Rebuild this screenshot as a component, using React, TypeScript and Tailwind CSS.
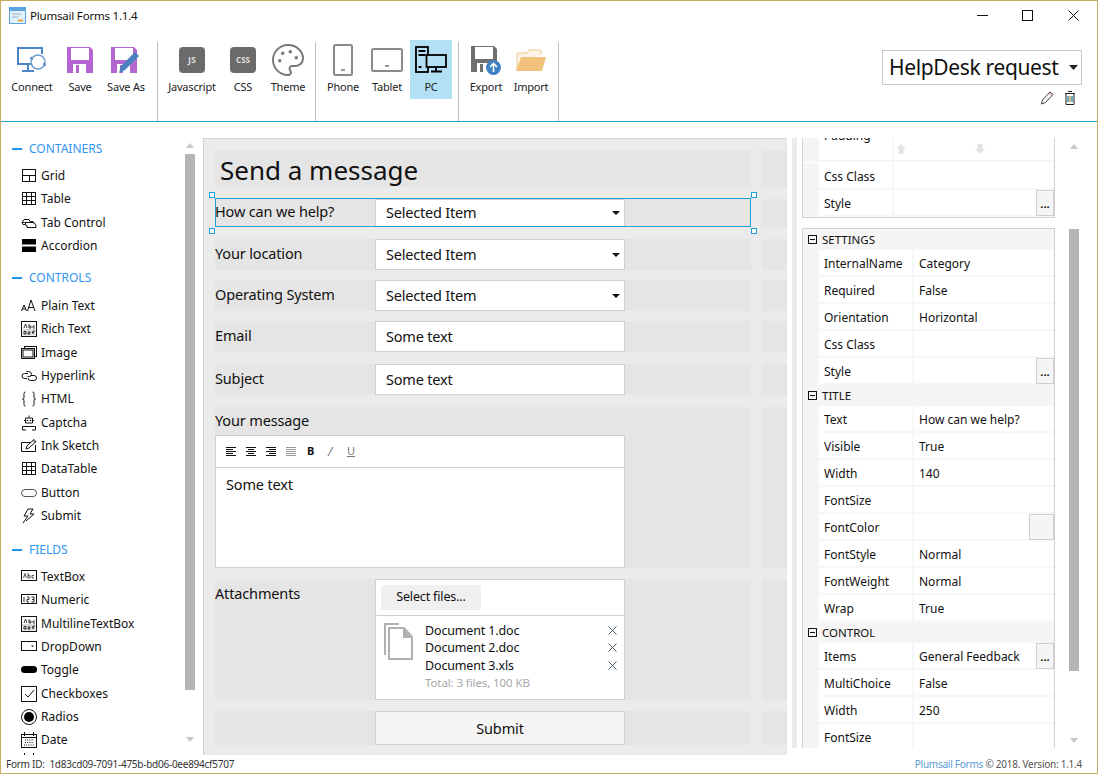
import { Palette } from 'lucide-react'
import type { ReactNode } from 'react'

const ink = { fill: 'none', stroke: '#111', strokeWidth: 1 }

function Ico({ children }: { children: ReactNode }) {
  return (
    <svg width="16" height="16" viewBox="0 0 16 16" className="shrink-0" {...ink}>
      {children}
    </svg>
  )
}

const sideIcons: Record<string, ReactNode> = {
  Grid: <><rect x="1.5" y="1.5" width="13" height="12" /><path d="M1.5 7.5h13M8.5 7.5v6" /></>,
  Table: <><rect x="1.5" y="1.5" width="13" height="12" /><path d="M1.5 5.5h13M1.5 9.5h13M5.5 1.5v12M10.5 1.5v12" /></>,
  'Tab Control': <path d="M1 7.5l2-3h5l1 2h3l1 2M3.5 7.5h-2.5M5 10.5l-1-3h9l2 3v2H6v-2zM1 7.5l1 2h2" />,
  Accordion: <><rect x="1" y="1" width="14" height="5.5" fill="#000" stroke="none" /><rect x="1" y="8.5" width="14" height="5.5" fill="#000" stroke="none" /></>,
  'Plain Text': <path d="M.5 13l2.5-6 2.5 6M1.5 11h3M6.5 13l3.500-11 4 11M8 9.500h5" />,
  'Rich Text': <><rect x=".5" y=".5" width="15" height="15" /><rect x="1.500" y="8" width="13" height="6.500" fill="#d8d8d8" stroke="none" /><path d="M3 7l1.500-4L6 7M8 3v4h2V5H8M14 5h-2v2h2M3 13h2v-2.500H3zM7 11h2v1H7v1h2M12 13v-3h2M11 11.500h2" strokeWidth=".8" /></>,
  Image: <><rect x="3.500" y="1.500" width="12" height="10" /><rect x=".5" y="3.500" width="13" height="10" fill="#fff" /><rect x="2" y="5" width="10" height="7" fill="#fff" /></>,
  Hyperlink: <path d="M7 5.500H3.500a2.500 2.500 0 0 0 0 5H6M5.500 3.500h2a3 3 0 0 1 3 3v0a2 2 0 0 1-2 2H6.500M9 7.500H13a2.500 2.500 0 0 1 0 5H9.500A2.500 2.500 0 0 1 7 10" />,
  HTML: <path d="M4.500 1C2.500 1 3 3 3 5S3 8 1.500 8C3 8 3 9 3 11s-.5 4 1.500 4M11.500 1c2 0 1.500 2 1.500 4s0 3 1.500 3c-1.500 0-1.500 1-1.500 3s.5 4-1.500 4" />,
  Captcha: <><path d="M8 .5v2M4.500 3h7v5h-7zM1.500 15v-3.500h13V15M1.500 15H5M11 15h3.500M3 5.500h1.500M11.500 5.500H13" /><circle cx="6.500" cy="5.500" r=".8" fill="#000" stroke="none" /><circle cx="9.500" cy="5.500" r=".8" fill="#000" stroke="none" /></>,
  'Ink Sketch': <path d="M10 4.500H.5v9h14V7M5 11l1-3 7-6.500 2 2-7 6.500-3 1zM12 2.500l2 2" />,
  DataTable: <><rect x="1.500" y="1.500" width="13" height="12" /><path d="M1.500 5.500h13M1.500 9.500h13M5.500 1.500v12M10.500 1.500v12" /></>,
  Button: <rect x=".5" y="4.500" width="15" height="7" rx="3.500" stroke="#555" />,
  Submit: <path d="M7 1l-4 7h4l-5 7M7 1h5L9 6h4L5 13" />,
  TextBox: <><rect x=".5" y="1.500" width="15" height="10" /><path d="M2.500 9l1.500-4.500L5.500 9M7 4v5h2V6.500H7M13 6.500h-2V9h2" strokeWidth=".9" stroke="#444" /></>,
  Numeric: <><rect x=".5" y="2.500" width="15" height="9" /><path d="M3 5v5M6 5h2v2.500H6V10h2M10.500 5H13v2.500h-2M13 7.500V10h-2.500" strokeWidth=".9" /></>,
  MultilineTextBox: <><rect x=".5" y=".5" width="15" height="15" /><rect x="1.500" y="8" width="13" height="6.500" fill="#d8d8d8" stroke="none" /><path d="M3 7l1.500-4L6 7M8 3v4h2V5H8M14 5h-2v2h2M3 13h2v-2.500H3zM7 11h2v1H7v1h2M12 13v-3h2M11 11.500h2" strokeWidth=".8" /></>,
  DropDown: <><rect x=".5" y="2.500" width="15" height="9" /><path d="M10 6.500h3l-1.500 1.500z" fill="#000" stroke="none" /></>,
  Toggle: <rect x="0" y="4" width="16" height="7" rx="3.500" fill="#000" stroke="none" />,
  Checkboxes: <><rect x=".5" y=".5" width="15" height="15" /><path d="M4 8l3 3 6-7" /></>,
  Radios: <><circle cx="8" cy="8" r="7.500" /><circle cx="8" cy="8" r="5" fill="#000" stroke="none" /></>,
  Date: <><rect x=".5" y="2.500" width="15" height="13" /><path d="M3.500 0v4M12.500 0v4M.5 5.500h15" /><path d="M4 8h9M4 10.500h9M3 13h10" strokeDasharray="1 1.200" /></>,
}

function SideItem({ name }: { name: string }) {
  return (
    <div className="flex h-[23.33px] items-center gap-[4px] pl-[20px] text-[12px] text-[#111]">
      <Ico>{sideIcons[name]}</Ico>
      <span>{name}</span>
    </div>
  )
}

function SideHeader({ title, className }: { title: string; className: string }) {
  return (
    <div className={`flex h-[20px] items-center gap-[7px] pl-[11px] text-[12px] text-[#2f96f3] ${className}`}>
      <div className="h-[2px] w-[10px] bg-[#1e96f0]" />
      <span>{title}</span>
    </div>
  )
}

function Scrollbar({ pad, thumb, end }: { pad: string; thumb: string; end: string }) {
  return (
    <div className={`flex w-[10px] flex-col items-center ${pad}`}>
      <svg width="8" height="5" viewBox="0 0 8 5" className="shrink-0"><path d="M4 0l4 5H0z" fill="#c8c8c8" /></svg>
      <div className={`w-[10px] shrink-0 bg-[#b5b5b5] ${thumb}`} />
      <svg width="8" height="5" viewBox="0 0 8 5" className={`shrink-0 ${end}`}><path d="M4 5l4-5H0z" fill="#c8c8c8" /></svg>
    </div>
  )
}

function ToolButton({ label, icon, width, active }: { label: string; icon: ReactNode; width: string; active?: boolean }) {
  return (
    <div className={`flex h-[59px] flex-col items-center ${width} ${active ? 'bg-[#b3e0f5]' : ''}`}>
      <div className="flex h-[40px] items-center justify-center">{icon}</div>
      <div className="text-[11px] leading-[14px] tracking-[-0.2px] text-[#222]">{label}</div>
    </div>
  )
}

function Floppy({ color }: { color: string }) {
  return (
    <svg width="26" height="26" viewBox="0 0 26 26">
      <path d="M0 0h23l3 3v23H0z" fill={color} />
      <rect x="4" y="1" width="18" height="12" fill="#fff" />
      <rect x="6" y="17" width="13" height="9" fill="#fff" />
      <rect x="9" y="18" width="3" height="8" fill={color} />
    </svg>
  )
}

function ConnectIcon() {
  return (
    <svg width="32" height="28" viewBox="0 0 32 28" fill="none" stroke="#4a86c5" strokeWidth="2">
      <path d="M16 18H2V2h24v6" />
      <path d="M12 19v5M6 25h12" />
      <circle cx="22" cy="16" r="7" stroke="#6f9fcf" strokeWidth="1.500" />
      <path d="M15 11l1 3M29 20l-1-3" />
    </svg>
  )
}

function SaveAsIcon() {
  return (
    <div className="relative h-[26px] w-[30px]">
      <Floppy color="#b565cf" />
      <svg width="24" height="26" viewBox="0 0 24 26" className="absolute left-[6px] top-[3px]">
        <path d="M18 2l4 4-14 14-6 3 2-7z" fill="#4a7fc0" />
      </svg>
    </div>
  )
}

function BadgeIcon({ text, size }: { text: string; size: string }) {
  return (
    <div className={`flex h-[26px] w-[26px] items-center justify-center rounded-[4px] bg-[#6b6b6b] font-bold text-[#ddd] ${size}`}>
      {text}
    </div>
  )
}

function PhoneIcon() {
  return (
    <svg width="20" height="32" viewBox="0 0 20 32" fill="none">
      <rect x="1" y="1" width="18" height="30" rx="1.500" stroke="#8a8a8a" strokeWidth="2" />
      <path d="M8 26h4" stroke="#777" strokeWidth="1.500" />
    </svg>
  )
}

function TabletIcon() {
  return (
    <svg width="32" height="24" viewBox="0 0 32 24" fill="none">
      <rect x="1" y="1" width="30" height="22" rx="1.500" stroke="#8a8a8a" strokeWidth="2" />
      <path d="M14 18h4" stroke="#777" strokeWidth="1.500" />
    </svg>
  )
}

function PcIcon() {
  return (
    <svg width="32" height="28" viewBox="0 0 32 28" fill="none" stroke="#000" strokeWidth="1.800">
      <rect x="1" y="1" width="12" height="25" />
      <path d="M3.500 5h7M3.500 9h7M3.500 21h3" />
      <rect x="11.500" y="9" width="19.500" height="12" fill="#b3e0f5" />
      <path d="M21 21v4M16 25.500h11" />
    </svg>
  )
}

function ExportIcon() {
  return (
    <div className="relative h-[28px] w-[30px]">
      <Floppy color="#6f6f6f" />
      <svg width="15" height="15" viewBox="0 0 15 15" className="absolute left-[15px] top-[14px]">
        <circle cx="7.500" cy="7.500" r="7.500" fill="#3f81c4" />
        <path d="M7.500 12V4M4 7l3.500-3.500L11 7" fill="none" stroke="#fff" strokeWidth="1.600" />
      </svg>
    </div>
  )
}

function ImportIcon() {
  return (
    <svg width="30" height="23" viewBox="0 0 30 23">
      <path d="M1 21V4h10l2-3h12v5" fill="#fbf3e5" stroke="#efc98c" />
      <path d="M0 22L5 8h25l-4 14z" fill="#f0c27b" />
    </svg>
  )
}

function Toolbar() {
  return (
    <div className="flex h-[82px] shrink-0 border-b border-[#1f9fcd] pt-[2px]">
      <div className="flex h-[79px] w-[157px] items-start border-r border-[#bdbdbd] pl-[7px]">
        <div className="-mt-[2px] flex">
          <ToolButton label="Connect" width="w-[48px]" icon={<ConnectIcon />} />
          <ToolButton label="Save" width="w-[48px]" icon={<Floppy color="#b565cf" />} />
          <ToolButton label="Save As" width="w-[44px]" icon={<SaveAsIcon />} />
        </div>
      </div>
      <div className="flex h-[79px] w-[158px] items-start border-r border-[#bdbdbd] pl-[4px]">
        <div className="-mt-[2px] flex">
          <ToolButton label="Javascript" width="w-[60px]" icon={<BadgeIcon text="JS" size="text-[9px]" />} />
          <ToolButton label="CSS" width="w-[42px]" icon={<BadgeIcon text="CSS" size="text-[8px]" />} />
          <ToolButton label="Theme" width="w-[48px]" icon={<Palette size={36} strokeWidth={1.300} color="#777" />} />
        </div>
      </div>
      <div className="flex h-[79px] w-[143px] items-start border-r border-[#bdbdbd] pl-[6px]">
        <div className="-mt-[2px] flex gap-[2px]">
          <ToolButton label="Phone" width="w-[42px]" icon={<PhoneIcon />} />
          <ToolButton label="Tablet" width="w-[42px]" icon={<TabletIcon />} />
          <ToolButton label="PC" width="w-[42px]" active icon={<PcIcon />} />
        </div>
      </div>
      <div className="flex h-[79px] w-[100px] items-start border-r border-[#bdbdbd] pl-[5px]">
        <div className="-mt-[2px] flex">
          <ToolButton label="Export" width="w-[44px]" icon={<ExportIcon />} />
          <ToolButton label="Import" width="w-[46px]" icon={<ImportIcon />} />
        </div>
      </div>
      <div className="flex flex-1 flex-col items-end pr-[15px] pt-[8px]">
        <div className="flex h-[35px] w-[200px] items-center justify-between border border-[#c8c8c8] pl-[6px] pr-[3px] text-[21px] leading-none tracking-[-0.35px] text-[#111]">
          <span>HelpDesk request</span>
          <svg width="9" height="5" viewBox="0 0 9 5"><path d="M0 0h9L4.500 5z" fill="#222" /></svg>
        </div>
        <div className="mr-[5px] mt-[5px] flex gap-[9px]">
          <svg width="14" height="16" viewBox="0 0 14 16" fill="none" stroke="#444" strokeWidth="1">
            <path d="M1.500 14l1-4 7.500-8 3 2.500-7.500 8z" />
            <path d="M9 3l3 2.500" stroke="#c77" />
          </svg>
          <svg width="14" height="16" viewBox="0 0 14 16" fill="none" stroke="#222" strokeWidth="1">
            <path d="M5 1.500h4M2 3.500h10M3 3.500v11h8v-11" />
            <path d="M5 6v6" stroke="#3a8fc0" strokeWidth="1.500" />
            <path d="M7 6v6" stroke="#c9a13f" strokeWidth="1.500" />
            <path d="M9 6v6" stroke="#3a8fc0" strokeWidth="1.500" />
          </svg>
        </div>
      </div>
    </div>
  )
}

function Sidebar() {
  const containers = ['Grid', 'Table', 'Tab Control', 'Accordion']
  const controls = ['Plain Text', 'Rich Text', 'Image', 'Hyperlink', 'HTML', 'Captcha', 'Ink Sketch', 'DataTable', 'Button', 'Submit']
  const fields = ['TextBox', 'Numeric', 'MultilineTextBox', 'DropDown', 'Toggle', 'Checkboxes', 'Radios', 'Date']
  return (
    <div className="flex w-[202px] shrink-0 overflow-hidden bg-white">
      <div className="w-[184px] shrink-0 pt-[17px]">
        <SideHeader title="CONTAINERS" className="" />
        <div className="pt-[5.33px]">{containers.map((n) => <SideItem key={n} name={n} />)}</div>
        <SideHeader title="CONTROLS" className="mt-[10.33px]" />
        <div className="pt-[6.33px]">{controls.map((n) => <SideItem key={n} name={n} />)}</div>
        <SideHeader title="FIELDS" className="mt-[12.33px]" />
        <div className="pt-[5.33px]">{fields.map((n) => <SideItem key={n} name={n} />)}</div>
        {/* next item is scrolled out, only its top shows */}
        <div className="pl-[20px] pt-[1px]">
          <Ico><path d="M3.500 0v4M12.500 0v4" /></Ico>
        </div>
      </div>
      <Scrollbar pad="pt-[21px]" thumb="mt-[6px] h-[536px]" end="mt-[47px]" />
    </div>
  )
}

function Row({ className, children, selected }: { className: string; children: ReactNode; selected?: boolean }) {
  return (
    <div className={`relative flex gap-[11px] ${className}`}>
      <div className="flex w-[536px] shrink-0 bg-[#e5e5e5]">{children}</div>
      <div className="flex-1 bg-[#e5e5e5]" />
      {selected && (
        <>
          <div className="absolute -top-[1px] left-0 h-[29px] w-[536px] border border-[#1f9fdc]" />
          <div className="absolute -left-[6px] -top-[7px] h-[6px] w-[6px] border border-[#1f9fdc] bg-white" />
          <div className="absolute -left-[6px] top-[29px] h-[6px] w-[6px] border border-[#1f9fdc] bg-white" />
          <div className="absolute -top-[7px] left-[536px] h-[6px] w-[6px] border border-[#1f9fdc] bg-white" />
          <div className="absolute left-[536px] top-[29px] h-[6px] w-[6px] border border-[#1f9fdc] bg-white" />
        </>
      )}
    </div>
  )
}

function Field({ label, value, caret, selected, className }: { label: string; value: string; caret?: boolean; selected?: boolean; className: string }) {
  return (
    <Row className={className} selected={selected}>
      <div className="flex w-[160px] shrink-0 items-center pb-[2px] text-[14.500px] tracking-[-0.15px] text-[#111]">{label}</div>
      <div className="flex w-[250px] items-center justify-between border border-[#cfcfcf] bg-white pl-[10px] pr-[3px] text-[14.500px] tracking-[-0.2px] text-[#111]">
        <span>{value}</span>
        {caret && <svg width="8" height="4" viewBox="0 0 8 4" className="mr-[1px]"><path d="M0 0h8L4 4z" fill="#111" /></svg>}
      </div>
    </Row>
  )
}

function EditorTools() {
  const lines = (w: number[], stroke: string, anchor: 'l' | 'c' | 'r') => (
    <svg width="10" height="9" viewBox="0 0 10 9" stroke={stroke}>
      {w.map((v, i) => {
        const x = anchor === 'l' ? 0 : anchor === 'r' ? 10 - v : (10 - v) / 2
        return <path key={i} d={`M${x} ${i * 2 + 0.5}h${v}`} />
      })}
    </svg>
  )
  return (
    <div className="flex h-[32px] items-center border-b border-[#cfcfcf] pl-[10px]">
      <div className="flex gap-[10px]">
        {lines([10, 7, 10, 7, 10], '#111', 'l')}
        {lines([10, 6, 10, 6, 10], '#111', 'c')}
        {lines([10, 7, 10, 7, 10], '#111', 'r')}
        {lines([10, 10, 10, 10, 10], '#999', 'l')}
      </div>
      <span className="ml-[11px] w-[21px] text-[11px] font-bold text-[#111]">B</span>
      <span className="w-[19px] text-[12px] italic text-[#777]">/</span>
      <span className="text-[11px] text-[#777] underline">U</span>
    </div>
  )
}

function FileRow({ name, className }: { name: string; className: string }) {
  return (
    <div className={`flex items-center justify-between text-[12.500px] leading-[17px] tracking-[-0.15px] text-[#111] ${className}`}>
      <span>{name}</span>
      <svg width="9" height="9" viewBox="0 0 9 9" className="mb-[1px] mr-[7px]"><path d="M.5.500l8 8M8.500.500l-8 8" stroke="#4a5a68" fill="none" /></svg>
    </div>
  )
}

function FormCanvas() {
  return (
    <div className="mt-[16px] w-[584px] shrink-0 overflow-hidden border-l border-t border-[#d0d0d0] bg-[#ebebeb] pl-[11px] pt-[11px]">
      <Row className="h-[37px]">
        <div className="flex items-center pl-[5px] pt-[2px] text-[26px] leading-none text-[#111]">Send a message</div>
      </Row>
      <Field className="mt-[12px] h-[28px]" label="How can we help?" value="Selected Item" caret selected />
      <Field className="mt-[12px] h-[31px]" label="Your location" value="Selected Item" caret />
      <Field className="mt-[10px] h-[31px]" label="Operating System" value="Selected Item" caret />
      <Field className="mt-[10px] h-[31px]" label="Email" value="Some text" />
      <Field className="mt-[12px] h-[31px]" label="Subject" value="Some text" />
      <Row className="mt-[12px] h-[161px]">
        <div className="flex w-[410px] flex-col">
          <div className="flex h-[28px] shrink-0 items-center text-[14.500px] tracking-[-0.15px] text-[#111]">Your message</div>
          <div className="flex-1 border border-[#cfcfcf] bg-white">
            <EditorTools />
            <div className="pl-[10px] pt-[6px] text-[14.500px] tracking-[-0.15px] text-[#111]">Some text</div>
          </div>
        </div>
      </Row>
      <Row className="mt-[11px] h-[121px]">
        <div className="w-[160px] shrink-0 pt-[4px] text-[14.500px] tracking-[-0.15px] text-[#111]">Attachments</div>
        <div className="flex w-[250px] flex-col border border-[#cfcfcf] bg-white">
          <div className="h-[36px] shrink-0 border-b border-[#cfcfcf] pl-[5px] pt-[5px]">
            <div className="flex h-[25px] w-[100px] items-center justify-center bg-[#f0f0f0] text-[12.500px] tracking-[-0.15px] text-[#111]">Select files...</div>
          </div>
          <div className="flex flex-1 pl-[8px] pt-[6px]">
            <svg width="30" height="38" viewBox="0 0 30 38" fill="none" stroke="#b0b0b0" strokeWidth="2" className="mt-[1px] shrink-0">
              <path d="M1 32V1h14" />
              <path d="M5 5h15l8 9v22H5z" />
              <path d="M19 5l9 10h-9z" fill="#b0b0b0" stroke="none" />
            </svg>
            <div className="ml-[11px] flex-1">
              <FileRow name="Document 1.doc" className="" />
              <FileRow name="Document 2.doc" className="" />
              <FileRow name="Document 3.xls" className="mt-[1px]" />
              <div className="mt-[1px] text-[11.500px] leading-[16px] tracking-[-0.1px] text-[#a8a8a8]">Total: 3 files, 100 KB</div>
            </div>
          </div>
        </div>
      </Row>
      <Row className="mt-[11px] h-[34px]">
        <div className="w-[160px] shrink-0" />
        <div className="flex w-[250px] items-center justify-center border border-[#cfcfcf] bg-[#f5f5f5] pt-[1px] text-[14.500px] tracking-[-0.15px] text-[#111]">Submit</div>
      </Row>
    </div>
  )
}

function PropRow({ name, value, split, action }: { name: string; value?: string; split: string; action?: 'dots' | 'swatch' }) {
  return (
    <div className="flex h-[27px] shrink-0 pl-[16px]">
      <div className={`flex items-center border-b-2 border-r-2 border-[#f7f7f7] bg-white pl-[5px] pt-[2px] text-[12px] text-[#111] ${split}`}>
        {name}
      </div>
      <div className="flex flex-1 items-stretch justify-between border-b-2 border-[#f7f7f7] bg-white pl-[5px] text-[12px] text-[#111]">
        <span className="flex items-center pt-[2px]">{value}</span>
        {action === 'dots' && (
          <div className="flex h-[26px] w-[18px] items-center justify-center border border-[#cfcfcf] bg-[#f5f5f5] text-[11px] font-bold leading-none">...</div>
        )}
        {action === 'swatch' && <div className="h-[26px] w-[25px] border border-[#cfcfcf] bg-[#f5f5f5]" />}
      </div>
    </div>
  )
}

function GroupHeader({ title }: { title: string }) {
  return (
    <div className="flex h-[21px] shrink-0 items-center gap-[5px] pl-[5px] text-[11.500px] text-[#111]">
      <svg width="9" height="9" viewBox="0 0 9 9" fill="none" stroke="#111" className="shrink-0">
        <rect x=".5" y=".5" width="8" height="8" />
        <path d="M2 4.500h5" />
      </svg>
      {title}
    </div>
  )
}

function PropertyPanel() {
  const wide = 'w-[95px]'
  return (
    <div className="flex flex-1 overflow-hidden bg-white pb-[7px]">
      <div className="ml-[5px] mt-[16px] w-[5px] shrink-0 bg-[#ebebeb]" />
      <div className="ml-[5px] mt-[16px] w-[253px] shrink-0 overflow-hidden">
        <div className="border-x border-b border-[#d0d0d0] bg-[#f5f5f5]">
          <div className="flex h-[24px] pl-[16px]">
            <div className="h-[22px] w-[75px] border-r-2 border-[#f7f7f7] bg-white pl-[5px] text-[12px] leading-[12px] text-[#111]">
              <div className="-mt-[8px] h-[22px]">Padding</div>
            </div>
            <div className="flex h-[22px] flex-1 items-start gap-[69px] bg-white pl-[1px] pt-[6px]">
              <svg className="ml-[1px]" width="10" height="10" viewBox="0 0 10 10"><path d="M5 0l5 5H7.500v5h-5V5H0z" fill="#e4e4e4" /></svg>
              <svg width="10" height="10" viewBox="0 0 10 10"><path d="M5 10l5-5H7.500V0h-5v5H0z" fill="#e4e4e4" /></svg>
            </div>
          </div>
          <div className="h-[1px] bg-white" />
          <PropRow name="Css Class" split="w-[75px]" />
          <PropRow name="Style" split="w-[75px]" action="dots" />
        </div>
        <div className="mt-[10px] border-x border-t border-[#d0d0d0] bg-[#f5f5f5]">
          <GroupHeader title="SETTINGS" />
          <PropRow name="InternalName" value="Category" split={wide} />
          <PropRow name="Required" value="False" split={wide} />
          <PropRow name="Orientation" value="Horizontal" split={wide} />
          <PropRow name="Css Class" split={wide} />
          <PropRow name="Style" split={wide} action="dots" />
          <GroupHeader title="TITLE" />
          <PropRow name="Text" value="How can we help?" split={wide} />
          <PropRow name="Visible" value="True" split={wide} />
          <PropRow name="Width" value="140" split={wide} />
          <PropRow name="FontSize" split={wide} />
          <PropRow name="FontColor" split={wide} action="swatch" />
          <PropRow name="FontStyle" value="Normal" split={wide} />
          <PropRow name="FontWeight" value="Normal" split={wide} />
          <PropRow name="Wrap" value="True" split={wide} />
          <GroupHeader title="CONTROL" />
          <PropRow name="Items" value="General Feedback" split={wide} action="dots" />
          <PropRow name="MultiChoice" value="False" split={wide} />
          <PropRow name="Width" value="250" split={wide} />
          <PropRow name="FontSize" split={wide} />
        </div>
      </div>
      <div className="ml-[14px]">
        <Scrollbar pad="pt-[22px]" thumb="mt-[80px] h-[442px]" end="mt-[67px]" />
      </div>
    </div>
  )
}

export default function App() {
  return (
    <div className="flex h-[774px] w-[1098px] flex-col overflow-hidden border border-[#c9ae62] bg-white font-['Noto_Sans',sans-serif]">
      <div className="flex h-[39px] shrink-0 items-start justify-between">
        <div className="flex items-center gap-[4px] pl-[8px] pt-[6px]">
          <svg width="17" height="17" viewBox="0 0 17 17">
            <rect x=".5" y=".5" width="16" height="16" fill="#dff0fb" stroke="#5aa7e0" />
            <rect x="1" y="1" width="15" height="3" fill="#5aa7e0" />
            <path d="M3 7h9M3 10h7" stroke="#9fb6c8" />
            <path d="M9 13.500h5" stroke="#f0a030" strokeWidth="2" />
          </svg>
          <span className="text-[11.500px] tracking-[-0.2px] text-[#111]">Plumsail Forms 1.1.4</span>
        </div>
        <div className="flex items-center pt-[9px]">
          <svg width="11" height="11" viewBox="0 0 11 11" stroke="#111" fill="none" className="mr-[34px]"><path d="M0 5.500h11" /></svg>
          <svg width="11" height="11" viewBox="0 0 11 11" stroke="#111" fill="none" className="mr-[35px]"><rect x=".5" y=".5" width="10" height="10" /></svg>
          <svg width="11" height="11" viewBox="0 0 11 11" stroke="#111" fill="none" className="mr-[18px]"><path d="M.5.500l10 10M10.500.500l-10 10" /></svg>
        </div>
      </div>
      <Toolbar />
      <div className="flex min-h-0 flex-1">
        <Sidebar />
        <FormCanvas />
        <PropertyPanel />
      </div>
      <div className="flex h-[18px] shrink-0 items-center justify-between pl-[5px] pr-[15px] text-[10px] tracking-[-0.25px] text-[#333]">
        <span>Form ID:&nbsp; 1d83cd09-7091-475b-bd06-0ee894cf5707</span>
        <span className="text-[#555]"><span className="text-[#5b9bd5]">Plumsail Forms</span> © 2018. Version: 1.1.4</span>
      </div>
    </div>
  )
}
